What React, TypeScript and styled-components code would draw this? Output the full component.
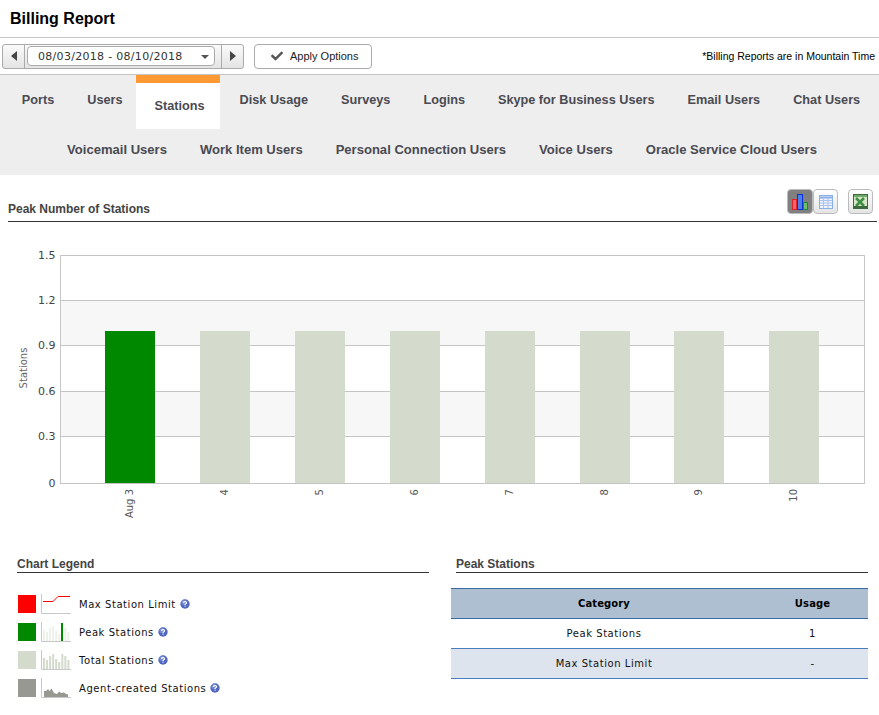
import React from "react";
import styled, { createGlobalStyle } from "styled-components";
import { FaCheck } from "react-icons/fa";

const GlobalStyle = createGlobalStyle`
  html, body {
    margin: 0;
    padding: 0;
    background: #fff;
  }
  body {
    font-family: "DejaVu Sans", Verdana, sans-serif;
    font-size: 11px;
    color: #111;
  }
`;

const firstRow = ["Ports", "Users", "Stations", "Disk Usage", "Surveys", "Logins", "Skype for Business Users", "Email Users", "Chat Users"];
const secondRow = ["Voicemail Users", "Work Item Users", "Personal Connection Users", "Voice Users", "Oracle Service Cloud Users"];
const bars = ["Aug 3", "4", "5", "6", "7", "8", "9", "10"];
const barX = [105, 200, 295, 390, 485, 580, 674, 769];
const ticks = [
  { label: "1.5", y: 255.5 },
  { label: "1.2", y: 300.5 },
  { label: "0.9", y: 345.5 },
  { label: "0.6", y: 391.5 },
  { label: "0.3", y: 436.5 },
  { label: "0", y: 483.5 },
];

function HelpIcon() {
  return (
    <svg width="10" height="10" viewBox="0 0 10 10">
      <circle cx="5" cy="5" r="4.7" fill="#5068c0" />
      <circle cx="4" cy="3.4" r="2.6" fill="#8c9ce0" opacity="0.6" />
      <path d="M3.4 3.9 C3.4 2.2 6.6 2.2 6.6 3.7 C6.6 4.8 5 4.7 5 5.9" fill="none" stroke="#fff" strokeWidth="1.1" />
      <rect x="4.5" y="6.6" width="1.1" height="1.1" fill="#fff" />
    </svg>
  );
}

function MiniChart({ kind }: { kind: "limit" | "peak" | "total" | "agent" }) {
  const heights = [11, 9, 13, 15, 10, 7, 15, 13, 9];
  return (
    <svg width="31" height="20" viewBox="0 0 31 20">
      <path d="M0.5 0 V19.5 H30" fill="none" stroke="#c8c8c8" />
      {kind === "limit" && <path d="M2 7.5 H12 L17 2.5 H29" fill="none" stroke="#f00" />}
      {(kind === "peak" || kind === "total") &&
        heights.map((h, i) => (
          <rect key={i} x={2 + i * 3.05} y={19 - h} width="2" height={h} fill={kind === "peak" ? "#eef0ea" : "#d4dacc"} />
        ))}
      {kind === "peak" && <rect x="20" y="1" width="2" height="18" fill="#008800" />}
      {kind === "agent" && (
        <path d="M3 19 V13 L5 13 L7 11 L8.5 13 L10.5 10.5 L13 15 L16 16 L18 13.5 L20 15 L23 14.5 L25 16 L27 16.5 V19 Z" fill="#979991" />
      )}
    </svg>
  );
}

function ChartIcon() {
  return (
    <svg width="16" height="16" viewBox="0 0 16 16">
      <rect x="0.5" y="5.5" width="4" height="10" fill="#f4626a" stroke="#e0222a" />
      <rect x="5.5" y="0.5" width="5" height="15" fill="#4a80e8" stroke="#1030d0" />
      <rect x="11.5" y="8.5" width="4" height="7" fill="#6cc06c" stroke="#1a8a3a" />
    </svg>
  );
}

function TableIcon() {
  return (
    <svg width="14" height="14" viewBox="0 0 14 14">
      <rect x="0.5" y="0.5" width="13" height="13" fill="#eef3fc" stroke="#8aaee6" />
      <path d="M0.5 2.5 H13.5" stroke="#8aaee6" strokeWidth="2" />
      <path d="M1 5.5 H13 M1 8 H13 M1 10.5 H13 M4.5 3 V13 M9 3 V13" stroke="#a9c3ee" />
    </svg>
  );
}

function ExcelIcon() {
  return (
    <svg width="15" height="15" viewBox="0 0 15 15">
      <rect x="0.5" y="0.5" width="14" height="14" fill="#d6e8c8" stroke="#3d6b3d" />
      <rect x="1" y="1" width="13" height="2" fill="#6fa868" />
      <path d="M3 4 L11 12 M11 4 L3 12" stroke="#3f8f45" strokeWidth="2.6" />
      <path d="M1 13 H14" stroke="#3d6b3d" strokeWidth="2" />
    </svg>
  );
}

function BarChart() {
  return (
    <ChartSvg width="879" height="322" viewBox="0 222 879 322">
      <rect x="60" y="300" width="804" height="46" fill="#f7f7f7" />
      <rect x="60" y="391" width="804" height="46" fill="#f7f7f7" />
      <path d="M60.5 255 V483.5" stroke="#c8c8c8" fill="none" />
      <path d="M864.5 255 V483.5" stroke="#c8c8c8" fill="none" />
      {ticks.map((t) => (
        <g key={t.label}>
          <line x1="60" x2="865" y1={t.y} y2={t.y} stroke="#c4c4c4" />
          <text x="55.5" y={t.y + 3.5} textAnchor="end" fontSize="11" fill="#444">{t.label}</text>
        </g>
      ))}
      {bars.map((b, i) => (
        <g key={b}>
          <rect x={barX[i]} y="331" width="50" height="152" fill={i === 0 ? "#008800" : "#d4dacc"} />
          <text
            transform={`translate(${barX[i] + 28} 489) rotate(-90)`}
            textAnchor="end"
            fontSize="10"
            fill="#555"
          >
            {b}
          </text>
        </g>
      ))}
      <text transform="translate(27 368) rotate(-90)" textAnchor="middle" fontSize="10" fill="#666">Stations</text>
    </ChartSvg>
  );
}

export default function App() {
  return (
    <Page>
      <GlobalStyle />
      <Title>Billing Report</Title>
      <Toolbar>
        <DateGroup>
          <ArrowButton $left><Triangle $left /></ArrowButton>
          <DateSelect>
            08/03/2018 - 08/10/2018
            <Caret />
          </DateSelect>
          <ArrowButton><Triangle /></ArrowButton>
        </DateGroup>
        <ApplyButton>
          <FaCheck size={12} color="#555" />
          Apply Options
        </ApplyButton>
        <TimeNote>*Billing Reports are in Mountain Time</TimeNote>
      </Toolbar>
      <TabBar>
        <TabRow $size={12.7}>
          {firstRow.map((t) => (
            <Tab key={t} $active={t === "Stations"}>{t}</Tab>
          ))}
        </TabRow>
        <TabRow $size={13.05}>
          {secondRow.map((t) => (
            <Tab key={t}>{t}</Tab>
          ))}
        </TabRow>
      </TabBar>
      <ChartHeader>
        <SectionTitle>Peak Number of Stations</SectionTitle>
        <ViewButtons>
          <ChartButton $active><ChartIcon /></ChartButton>
          <ViewButton><TableIcon /></ViewButton>
          <ExcelButton><ExcelIcon /></ExcelButton>
        </ViewButtons>
      </ChartHeader>
      <BarChart />
      <Bottom>
        <LegendPanel>
          <PanelTitle>Chart Legend</PanelTitle>
          <LegendList>
            <LegendRow>
              <Swatch $color="#ff0000" />
              <MiniChart kind="limit" />
              <LegendLabel>Max Station Limit</LegendLabel>
              <HelpIcon />
            </LegendRow>
            <LegendRow>
              <Swatch $color="#008800" />
              <MiniChart kind="peak" />
              <LegendLabel>Peak Stations</LegendLabel>
              <HelpIcon />
            </LegendRow>
            <LegendRow>
              <Swatch $color="#d4dacc" />
              <MiniChart kind="total" />
              <LegendLabel>Total Stations</LegendLabel>
              <HelpIcon />
            </LegendRow>
            <LegendRow>
              <Swatch $color="#979991" />
              <MiniChart kind="agent" />
              <LegendLabel>Agent-created Stations</LegendLabel>
              <HelpIcon />
            </LegendRow>
          </LegendList>
        </LegendPanel>
        <TablePanel>
          <TablePanelTitle>Peak Stations</TablePanelTitle>
          <UsageTable>
            <thead>
              <tr>
                <HeadCell $wide>Category</HeadCell>
                <HeadCell>Usage</HeadCell>
              </tr>
            </thead>
            <tbody>
              <tr>
                <BodyCell>Peak Stations</BodyCell>
                <BodyCell>1</BodyCell>
              </tr>
              <tr>
                <BodyCell $alt>Max Station Limit</BodyCell>
                <BodyCell $alt>-</BodyCell>
              </tr>
            </tbody>
          </UsageTable>
        </TablePanel>
      </Bottom>
    </Page>
  );
}

const Page = styled.div`
  width: 879px;
  height: 715px;
  overflow: hidden;
`;

const Title = styled.h1`
  margin: 0;
  height: 37px;
  padding-left: 10px;
  font: bold 16px/38px "Liberation Sans", Arial, sans-serif;
  color: #000;
  border-bottom: 1px solid #c4c4c4;
`;

const Toolbar = styled.div`
  height: 37px;
  display: flex;
  align-items: center;
  padding: 0 4px 0 2px;
  box-sizing: border-box;
  border-bottom: 1px solid #c4c4c4;
`;

const DateGroup = styled.div`
  width: 242px;
  height: 25px;
  box-sizing: border-box;
  display: flex;
  align-items: center;
  border: 1px solid #aaa;
  border-radius: 3px;
  background: linear-gradient(#fafafa, #e4e4e4);
`;

const ArrowButton = styled.div<{ $left?: boolean }>`
  width: 22px;
  height: 23px;
  box-sizing: border-box;
  display: flex;
  align-items: center;
  justify-content: center;
  border-${(p) => (p.$left ? "right" : "left")}: 1px solid #aaa;
`;

const Triangle = styled.span<{ $left?: boolean }>`
  width: 0;
  height: 0;
  border-top: 5px solid transparent;
  border-bottom: 5px solid transparent;
  border-${(p) => (p.$left ? "right" : "left")}: 6px solid #444;
`;

const DateSelect = styled.div`
  flex: 1;
  height: 18px;
  margin: 0 6px 0 2px;
  padding: 0 5px 0 10px;
  display: flex;
  align-items: center;
  justify-content: space-between;
  background: #fff;
  border: 1px solid #aaa;
  border-radius: 4px;
  font-size: 11px;
  letter-spacing: 0.3px;
  color: #333;
`;

const Caret = styled.span`
  width: 0;
  height: 0;
  margin-top: 2px;
  border-left: 4px solid transparent;
  border-right: 4px solid transparent;
  border-top: 4px solid #555;
`;

const ApplyButton = styled.div`
  width: 118px;
  height: 25px;
  margin-left: 10px;
  padding-left: 16px;
  box-sizing: border-box;
  display: flex;
  align-items: center;
  gap: 7px;
  border: 1px solid #aaa;
  border-radius: 4px;
  font: 11px "Liberation Sans", Arial, sans-serif;
  color: #222;
`;

const TimeNote = styled.div`
  margin-left: auto;
  font: 10.5px "Liberation Sans", Arial, sans-serif;
  color: #000;
`;

const TabBar = styled.nav`
  height: 100px;
  padding-left: 5px;
  background: #eee;
`;

const TabRow = styled.div<{ $size: number }>`
  height: 50px;
  padding-right: ${(p) => (p.$size < 13 ? "2px" : "0")};
  display: flex;
  justify-content: center;
  align-items: flex-start;
  font: bold ${(p) => p.$size}px "Liberation Sans", Arial, sans-serif;
`;

const Tab = styled.div<{ $active?: boolean }>`
  padding: 0 16.5px;
  height: ${(p) => (p.$active ? "46px" : "50px")};
  line-height: ${(p) => (p.$active ? "47px" : "50px")};
  color: #4a4a52;
  white-space: nowrap;
  ${(p) =>
    p.$active &&
    `
    background: #fff;
    border-top: 8px solid #ff9933;
    padding: 0 15px 0 19px;
    margin: 0 3.5px 0 -3.5px;
  `}
`;

const ChartHeader = styled.div`
  height: 47px;
  margin: 0 2px 0 8px;
  box-sizing: border-box;
  display: flex;
  align-items: flex-start;
  justify-content: space-between;
  border-bottom: 1px solid #333;
`;

const SectionTitle = styled.h2`
  margin: 27px 0 0;
  font: bold 12px "Liberation Sans", Arial, sans-serif;
  color: #444;
`;

const ViewButtons = styled.div`
  display: flex;
  margin: 14px 4px 0 0;
`;

const ViewButton = styled.div<{ $active?: boolean }>`
  width: 25px;
  height: 25px;
  box-sizing: border-box;
  display: flex;
  align-items: center;
  justify-content: center;
  border: 1px solid #bbb;
  border-radius: 4px;
  background: ${(p) => (p.$active ? "#808080" : "linear-gradient(#fff, #e4e4e4)")};
`;

const ChartButton = styled(ViewButton)`
  width: 26px;
`;

const ExcelButton = styled(ViewButton)`
  margin-left: 10px;
`;

const ChartSvg = styled.svg`
  display: block;
  font-family: "DejaVu Sans", Verdana, sans-serif;
`;

const Bottom = styled.div`
  display: flex;
  align-items: flex-start;
  margin-top: 12px;
`;

const LegendPanel = styled.section`
  width: 412px;
  margin-left: 17px;
`;

const PanelTitle = styled.h3`
  margin: 0;
  height: 16px;
  font: bold 12px/16px "Liberation Sans", Arial, sans-serif;
  color: #444;
  border-bottom: 1px solid #333;
`;

const LegendList = styled.div`
  display: flex;
  flex-direction: column;
  gap: 8px;
  margin-top: 21px;
`;

const LegendRow = styled.div`
  height: 20px;
  display: flex;
  align-items: center;
  padding-left: 1px;
`;

const Swatch = styled.span<{ $color: string }>`
  width: 18px;
  height: 18px;
  margin-right: 5px;
  background: ${(p) => p.$color};
`;

const LegendLabel = styled.span`
  margin: 0 4px 0 7px;
  font-size: 10px;
  letter-spacing: 0.55px;
  color: #111;
`;

const TablePanel = styled.section`
  width: 417px;
  margin-left: 22px;
`;

const TablePanelTitle = styled(PanelTitle)`
  margin-left: 5px;
`;

const UsageTable = styled.table`
  width: 100%;
  margin-top: 15px;
  border-collapse: collapse;
  table-layout: fixed;
  font-size: 10px;
  letter-spacing: 0.55px;
`;

const HeadCell = styled.th<{ $wide?: boolean }>`
  height: 29px;
  padding: 0;
  width: ${(p) => (p.$wide ? "306px" : "auto")};
  background: #adbfd1;
  border-top: 1px solid #3a6ba5;
  border-bottom: 1px solid #3a6ba5;
  font-weight: bold;
  letter-spacing: 0.1px;
  color: #000;
`;

const BodyCell = styled.td<{ $alt?: boolean }>`
  height: 29px;
  padding: 0;
  text-align: center;
  background: ${(p) => (p.$alt ? "#dde4ee" : "#fff")};
  border-bottom: 1px solid #4a7dbd;
  color: #111;
`;
